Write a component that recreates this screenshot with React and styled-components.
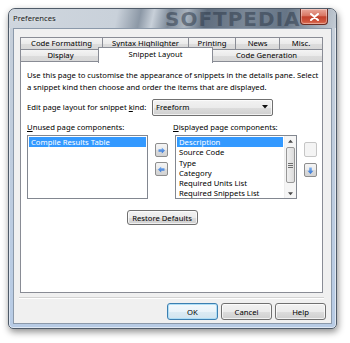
import React from 'react';
import styled, { createGlobalStyle } from 'styled-components';

const Global = createGlobalStyle`
  html, body { margin: 0; padding: 0; background: #ffffff; }
  body { font-family: "Noto Sans", "Open Sans", sans-serif; font-size: 7.7px; color: #000; }
  * { box-sizing: border-box; }
`;

const Page = styled.div`
  width: 350px;
  height: 343px;
  padding: 8px 0 0 8px;
  overflow: hidden;
`;

const Window = styled.div`
  position: relative;
  width: 329px;
  height: 321px;
  border: 1px solid #4f5b69;
  border-radius: 7px 7px 5px 5px;
  background: linear-gradient(to bottom, #c9d0d8 0px, #c4ceda 40px, #b7cbe5 100%);
  box-shadow: 1px 3px 7px rgba(0, 0, 0, 0.45), inset 0 0 0 1px rgba(255, 255, 255, 0.55);
  display: flex;
  flex-direction: column;
  padding: 0 4px 4px 4px;
  overflow: hidden;
`;

const TitleBar = styled.div`
  position: relative;
  height: 19px;
  margin: 0 -4px;
  padding: 0 4px;
  display: flex;
  align-items: flex-start;
  justify-content: space-between;
  background: linear-gradient(102deg, #cfd6de 0%, #c9d1da 33%, #8c98a6 40%, #c8d0d9 44%, #7d8a99 49%, #aab4bf 54%, #5f6d7e 60%, #7a8796 72%, #667586 84%, #a9b3be 95%, #c4ccd5 100%);
  border-radius: 6px 6px 0 0;
`;

const Title = styled.span`
  font-size: 7.7px;
  line-height: 19px;
  color: #1c1c1c;
  text-shadow: 0 0 6px rgba(255, 255, 255, 0.9);
`;

const Watermark = styled.span`
  position: absolute;
  left: 156px;
  top: -2px;
  font-family: "DejaVu Sans", sans-serif;
  font-weight: bold;
  font-size: 20px;
  letter-spacing: 1px;
  color: rgba(40, 52, 68, 0.5);
  pointer-events: none;
`;

const CloseButton = styled.div`
  width: 28px;
  height: 16px;
  margin-right: 4px;
  border: 1px solid #6b2b22;
  border-top: none;
  border-radius: 0 0 4px 4px;
  background: linear-gradient(to bottom, #e9a99c 0%, #d97663 45%, #c2412c 52%, #d0573f 85%, #e07a5e 100%);
  box-shadow: inset 0 0 0 1px rgba(255, 255, 255, 0.35);
  display: flex;
  align-items: center;
  justify-content: center;
`;

const Client = styled.div`
  flex: 1;
  background: #f0f0f0;
  border: 1px solid #8b99aa;
  padding: 8px 7px 0 6px;
  display: flex;
  flex-direction: column;
`;

const TabStrip = styled.div`
  width: 303px;
  display: flex;
  flex-direction: column;
`;

const TabRow = styled.div`
  display: flex;
  height: 13px;
  margin-top: ${p => (p.$second ? '-1px' : '0')};
`;

const Tab = styled.div`
  flex: none;
  width: ${p => p.$w}px;
  height: 13px;
  margin-right: -1px;
  border: 1px solid #898c95;
  background: linear-gradient(to bottom, #f4f4f4 0%, #ebebeb 50%, #dddddd 51%, #d8d8d8 100%);
  text-align: center;
  line-height: 11px;
  white-space: nowrap;
  color: #000;
  ${p =>
    p.$selected &&
    `
    position: relative;
    z-index: 2;
    width: ${p.$w + 4}px;
    height: 16px;
    margin: -2px -3px 0 -2px;
    background: #ffffff;
    border-bottom: none;
    line-height: 13px;
  `}
`;

const Panel = styled.div`
  width: 303px;
  height: 232px;
  margin-top: -1px;
  border: 1px solid #898c95;
  background: #ffffff;
  padding: 7px 6px 0 6px;
  display: flex;
  flex-direction: column;
`;

const Description = styled.p`
  margin: 0;
  line-height: 12px;
  white-space: nowrap;
`;

const EditRow = styled.div`
  display: flex;
  align-items: center;
  height: 16px;
  margin-top: 6px;
`;

const EditLabel = styled.span`
  width: 125px;
  white-space: nowrap;
`;

const Combo = styled.div`
  width: 121px;
  height: 17px;
  border: 1px solid #707070;
  border-radius: 2px;
  background: linear-gradient(to bottom, #f2f2f2 0%, #ebebeb 50%, #dddddd 51%, #cfcfcf 100%);
  box-shadow: inset 0 0 0 1px rgba(255, 255, 255, 0.7);
  display: flex;
  align-items: center;
  justify-content: space-between;
  padding: 0 4px 0 3px;
`;

const Components = styled.div`
  display: grid;
  grid-template-columns: 121px 13px 122px 13px;
  grid-template-rows: 12px 64px auto;
  column-gap: 7px;
  row-gap: 2px;
  margin-top: 6px;
`;

const GroupLabel = styled.span`
  grid-column: ${p => p.$col};
  line-height: 12px;
  white-space: nowrap;
  margin-left: ${p => p.$shift || 0}px;
`;

const ListBox = styled.div`
  height: 64px;
  border: 1px solid #828790;
  background: #ffffff;
  display: flex;
  overflow: hidden;
`;

const Items = styled.div`
  flex: 1;
  min-width: 0;
  padding: 1px;
`;

const Item = styled.div`
  height: 10.3px;
  line-height: 10.3px;
  padding-left: 2px;
  white-space: nowrap;
  background: ${p => (p.$selected ? '#3399ff' : 'transparent')};
  color: ${p => (p.$selected ? '#ffffff' : '#000000')};
`;

const ScrollBar = styled.div`
  width: 12px;
  display: flex;
  flex-direction: column;
  align-items: center;
  background: #f5f5f5;
  border-left: 1px solid #eeeeee;
`;

const ScrollArrow = styled.div`
  height: 9px;
  width: 100%;
  display: flex;
  align-items: center;
  justify-content: center;
`;

const Track = styled.div`
  flex: 1;
  width: 100%;
  padding: 2px 1px 3px 1px;
`;

const Thumb = styled.div`
  height: 36px;
  border: 1px solid #979797;
  border-radius: 2px;
  background: linear-gradient(to right, #f0f0f0, #dcdcdc);
  display: flex;
  flex-direction: column;
  align-items: center;
  justify-content: center;
  gap: 1px;
`;

const Grip = styled.span`
  width: 5px;
  height: 1px;
  background: #6f6f6f;
`;

const ButtonColumn = styled.div`
  display: flex;
  flex-direction: column;
  gap: ${p => p.$gap}px;
  padding-top: ${p => p.$top}px;
`;

const SmallButton = styled.div`
  width: 13px;
  height: ${p => p.$h}px;
  border: 1px solid ${p => (p.$disabled ? '#c6c6c6' : '#8d8d8d')};
  border-radius: 2px;
  background: ${p =>
    p.$disabled
      ? '#f4f4f4'
      : 'linear-gradient(to bottom, #f4f4f4 0%, #ebebeb 50%, #dcdcdc 51%, #d2d2d2 100%)'};
  display: flex;
  align-items: center;
  justify-content: center;
`;

const PushButton = styled.div`
  width: ${p => p.$w}px;
  height: ${p => p.$h}px;
  border: 1px solid ${p => (p.$default ? '#3c7fb1' : '#707070')};
  border-radius: 3px;
  background: ${p =>
    p.$default
      ? 'linear-gradient(to bottom, #f4f9fc 0%, #e9f3f9 50%, #dbebf4 51%, #d1e4ef 100%)'
      : 'linear-gradient(to bottom, #f2f2f2 0%, #ebebeb 50%, #dddddd 51%, #cfcfcf 100%)'};
  box-shadow: inset 0 0 0 1px ${p => (p.$default ? 'rgba(170, 220, 245, 0.9)' : 'rgba(255, 255, 255, 0.7)')};
  display: flex;
  align-items: center;
  justify-content: center;
  white-space: nowrap;
  color: #000;
`;

const RestoreCell = styled.div`
  grid-column: 1 / 4;
  justify-self: center;
  margin-top: 9px;
`;

const Separator = styled.div`
  width: 305px;
  margin: 4px 0 0 -1px;
  border-top: 1px solid #d3d3d3;
  border-bottom: 1px solid #ffffff;
`;

const DialogButtons = styled.div`
  display: flex;
  justify-content: flex-end;
  gap: 3px;
  margin: 4px -2px 0 0;
`;

const Underline = styled.span`
  text-decoration: underline;
`;

const ArrowIcon = ({ dir }) => {
  const paths = {
    right: 'M0.5 2.2 H3.8 V0.5 L7 3.5 L3.8 6.5 V4.8 H0.5 Z',
    left: 'M6.5 2.2 H3.2 V0.5 L0 3.5 L3.2 6.5 V4.8 H6.5 Z',
    down: 'M2.2 0.5 V3.8 H0.5 L3.5 7 L6.5 3.8 H4.8 V0.5 Z',
  };
  return (
    <svg width="7" height="7" viewBox="0 0 7 7">
      <defs>
        <linearGradient id={`ag-${dir}`} x1="0" y1="0" x2="0" y2="1">
          <stop offset="0" stopColor="#7fb2f0" />
          <stop offset="1" stopColor="#2f6fd0" />
        </linearGradient>
      </defs>
      <path d={paths[dir]} fill={`url(#ag-${dir})`} />
    </svg>
  );
};

const Caret = ({ up, size = 5, color = '#444' }) => (
  <svg width={size} height={Math.ceil(size / 2) + 1} viewBox="0 0 6 4">
    <path d={up ? 'M0 4 L3 0.5 L6 4 Z' : 'M0 0 L6 0 L3 3.5 Z'} fill={color} />
  </svg>
);

const CloseGlyph = () => (
  <svg width="9" height="8" viewBox="0 0 9 8">
    <path d="M1 1 L8 7 M8 1 L1 7" stroke="#ffffff" strokeWidth="2" strokeLinecap="round" />
  </svg>
);

const rowOne = [
  { label: 'Code Formatting', w: 83 },
  { label: 'Syntax Highlighter', w: 87 },
  { label: 'Printing', w: 48 },
  { label: 'News', w: 45 },
  { label: 'Misc.', w: 44 },
];

const rowTwo = [
  { label: 'Display', w: 81 },
  { label: 'Snippet Layout', w: 111, selected: true },
  { label: 'Code Generation', w: 113 },
];

const displayed = [
  'Description',
  'Source Code',
  'Type',
  'Category',
  'Required Units List',
  'Required Snippets List',
];

export default function App() {
  return (
    <Page>
      <Global />
      <Window>
        <TitleBar>
          <Title>Preferences</Title>
          <Watermark>SOFTPEDIA</Watermark>
          <CloseButton>
            <CloseGlyph />
          </CloseButton>
        </TitleBar>
        <Client>
          <TabStrip>
            <TabRow>
              {rowOne.map(t => (
                <Tab key={t.label} $w={t.w}>
                  {t.label}
                </Tab>
              ))}
            </TabRow>
            <TabRow $second>
              {rowTwo.map(t => (
                <Tab key={t.label} $w={t.w} $selected={t.selected}>
                  {t.label}
                </Tab>
              ))}
            </TabRow>
          </TabStrip>
          <Panel>
            <Description>
              Use this page to customise the appearance of snippets in the details pane. Select
              <br />
              a snippet kind then choose and order the items that are displayed.
            </Description>
            <EditRow>
              <EditLabel>
                Edit page layout for snippet <Underline>k</Underline>ind:
              </EditLabel>
              <Combo>
                <span>Freeform</span>
                <Caret size={6} color="#111" />
              </Combo>
            </EditRow>
            <Components>
              <GroupLabel $col="1 / 3">
                <Underline>U</Underline>nused page components:
              </GroupLabel>
              <GroupLabel $col="3 / 5" $shift={-2}>
                <Underline>D</Underline>isplayed page components:
              </GroupLabel>
              <ListBox>
                <Items>
                  <Item $selected>Compile Results Table</Item>
                </Items>
              </ListBox>
              <ButtonColumn $top={8} $gap={5}>
                <SmallButton $h={14}>
                  <ArrowIcon dir="right" />
                </SmallButton>
                <SmallButton $h={14}>
                  <ArrowIcon dir="left" />
                </SmallButton>
              </ButtonColumn>
              <ListBox>
                <Items>
                  {displayed.map((d, i) => (
                    <Item key={d} $selected={i === 0}>
                      {d}
                    </Item>
                  ))}
                </Items>
                <ScrollBar>
                  <ScrollArrow>
                    <Caret up size={5} color="#4a4a4a" />
                  </ScrollArrow>
                  <Track>
                    <Thumb>
                      <Grip />
                      <Grip />
                      <Grip />
                    </Thumb>
                  </Track>
                  <ScrollArrow>
                    <Caret size={5} color="#4a4a4a" />
                  </ScrollArrow>
                </ScrollBar>
              </ListBox>
              <ButtonColumn $top={7} $gap={6}>
                <SmallButton $h={15} $disabled />
                <SmallButton $h={14}>
                  <ArrowIcon dir="down" />
                </SmallButton>
              </ButtonColumn>
              <RestoreCell>
                <PushButton $w={71} $h={15}>
                  Restore Defaults
                </PushButton>
              </RestoreCell>
            </Components>
          </Panel>
          <Separator />
          <DialogButtons>
            <PushButton $w={51} $h={17} $default>
              OK
            </PushButton>
            <PushButton $w={51} $h={17}>
              Cancel
            </PushButton>
            <PushButton $w={51} $h={17}>
              Help
            </PushButton>
          </DialogButtons>
        </Client>
      </Window>
    </Page>
  );
}
